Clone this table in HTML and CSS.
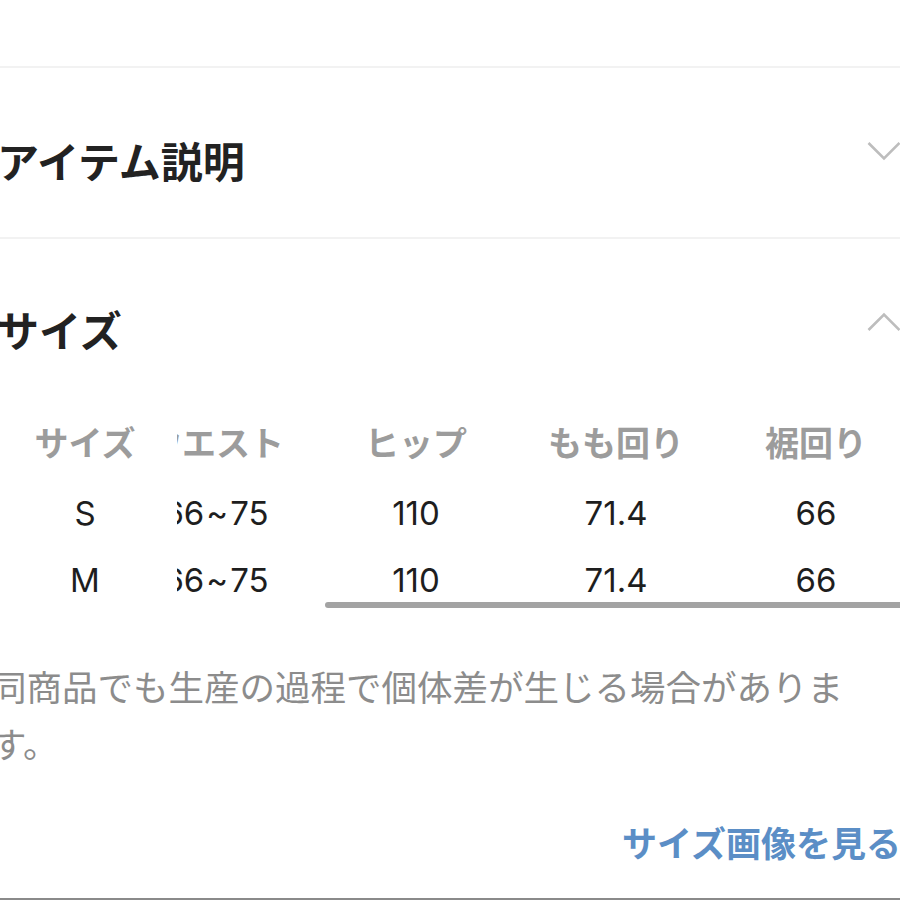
FILE: index.html
```html
<!DOCTYPE html>
<html lang="ja">
<head>
<meta charset="utf-8">
<title>サイズ</title>
<link rel="stylesheet" href="styles.css">
</head>
<body>
<div class="page">
  <div class="top-space"></div>
  <section class="acc acc-first">
    <div class="acc-head">
      <h2 class="acc-title">アイテム説明</h2>
      <svg class="chev chev-down" width="34" height="20" viewBox="0 0 34 20"><polyline points="1.5,2 17,17.5 32.5,2" fill="none" stroke="#bdbdbd" stroke-width="2.6"/></svg>
    </div>
  </section>
  <section class="acc acc-size">
    <div class="acc-head">
      <h2 class="acc-title">サイズ</h2>
      <svg class="chev chev-up" width="34" height="20" viewBox="0 0 34 20"><polyline points="1.5,18 17,2.5 32.5,18" fill="none" stroke="#bdbdbd" stroke-width="2.6"/></svg>
    </div>
    <div class="size-table">
      <div class="fixed-col">
        <div class="cell th">サイズ</div>
        <div class="cell td">S</div>
        <div class="cell td">M</div>
      </div>
      <div class="scroll-area">
        <div class="scroll-inner">
          <div class="row">
            <div class="cell th col">ウエスト</div>
            <div class="cell th col">ヒップ</div>
            <div class="cell th col">もも回り</div>
            <div class="cell th col">裾回り</div>
          </div>
          <div class="row">
            <div class="cell td col">66<span class="tilde">~</span>75</div>
            <div class="cell td col">110</div>
            <div class="cell td col">71.4</div>
            <div class="cell td col">66</div>
          </div>
          <div class="row">
            <div class="cell td col">66<span class="tilde">~</span>75</div>
            <div class="cell td col">110</div>
            <div class="cell td col">71.4</div>
            <div class="cell td col">66</div>
          </div>
        </div>
        <div class="scrollbar"></div>
      </div>
    </div>
    <p class="note">同商品でも生産の過程で個体差が生じる場合があります。</p>
    <div class="link-row"><a class="size-link" href="#">サイズ画像を見る</a></div>
  </section>
  <div class="bottom-line"></div>
</div>
</body>
</html>
```

FILE: styles.css
```css
html, body {
  margin: 0;
  padding: 0;
  background: #ffffff;
}
body {
  width: 900px;
  height: 900px;
  overflow: hidden;
  font-family: "Liberation Sans", "Noto Sans CJK JP", sans-serif;
}
.page {
  width: 900px;
  height: 900px;
  display: flex;
  flex-direction: column;
  overflow: hidden;
}
.top-space {
  height: 66px;
  border-bottom: 2px solid #f2f2f2;
}
.acc-first {
  padding: 62px 0 47px;
  border-bottom: 2px solid #f2f2f2;
}
.acc-size {
  padding-top: 60px;
}
.acc-head {
  display: flex;
  justify-content: space-between;
  align-items: flex-start;
  height: 60px;
}
.acc-title {
  margin: 0 0 0 -3px;
  font-family: "Noto Sans CJK JP", sans-serif;
  font-size: 42px;
  line-height: 60px;
  font-weight: 700;
  color: #222222;
  letter-spacing: 0;
}
.chev {
  display: block;
  margin-right: -1px;
}
.chev-down {
  margin-top: 11px;
}
.chev-up {
  margin-top: 13px;
}
.size-table {
  display: flex;
  margin-top: 61px;
}
.fixed-col {
  width: 170px;
  flex: none;
  display: flex;
  flex-direction: column;
  gap: 23px;
}
.fixed-col .th {
  margin-bottom: 4px;
}
.scroll-area {
  flex: 1;
  overflow: hidden;
  margin-left: 7px;
}
.scroll-inner {
  margin-left: -61px;
  display: flex;
  flex-direction: column;
  gap: 23px;
}
.scroll-inner .row:first-child {
  margin-bottom: 4px;
}
.row {
  display: flex;
}
.cell {
  height: 44px;
  line-height: 44px;
  text-align: center;
  white-space: nowrap;
}
.col {
  width: 200px;
  flex: none;
}
.th {
  font-family: "Noto Sans CJK JP", sans-serif;
  font-size: 34px;
  font-weight: 700;
  color: #9c9c9c;
}
.td {
  font-family: Inter, "Liberation Sans", "Noto Sans CJK JP", sans-serif;
  font-size: 33px;
  font-weight: 400;
  color: #1e1e1e;
}
.tilde {
  margin: 0 2px;
}
.scrollbar {
  margin-left: 148px;
  width: 600px;
  height: 6px;
  border-radius: 3px;
  background: #a3a3a3;
}
.note {
  margin: 49px 0 0 -9px;
  width: 862px;
  font-family: "Noto Sans CJK JP", sans-serif;
  font-size: 35.5px;
  line-height: 57px;
  font-weight: 400;
  color: #8c8c8c;
}
.link-row {
  display: flex;
  justify-content: flex-end;
  margin-top: 46px;
  margin-right: -1px;
}
.size-link {
  font-family: "Noto Sans CJK JP", sans-serif;
  font-size: 35px;
  line-height: 50px;
  font-weight: 700;
  color: #5b8ec6;
  text-decoration: none;
}
.bottom-line {
  margin-top: auto;
  height: 2px;
  background: #8a8a8a;
  flex: none;
}
```
